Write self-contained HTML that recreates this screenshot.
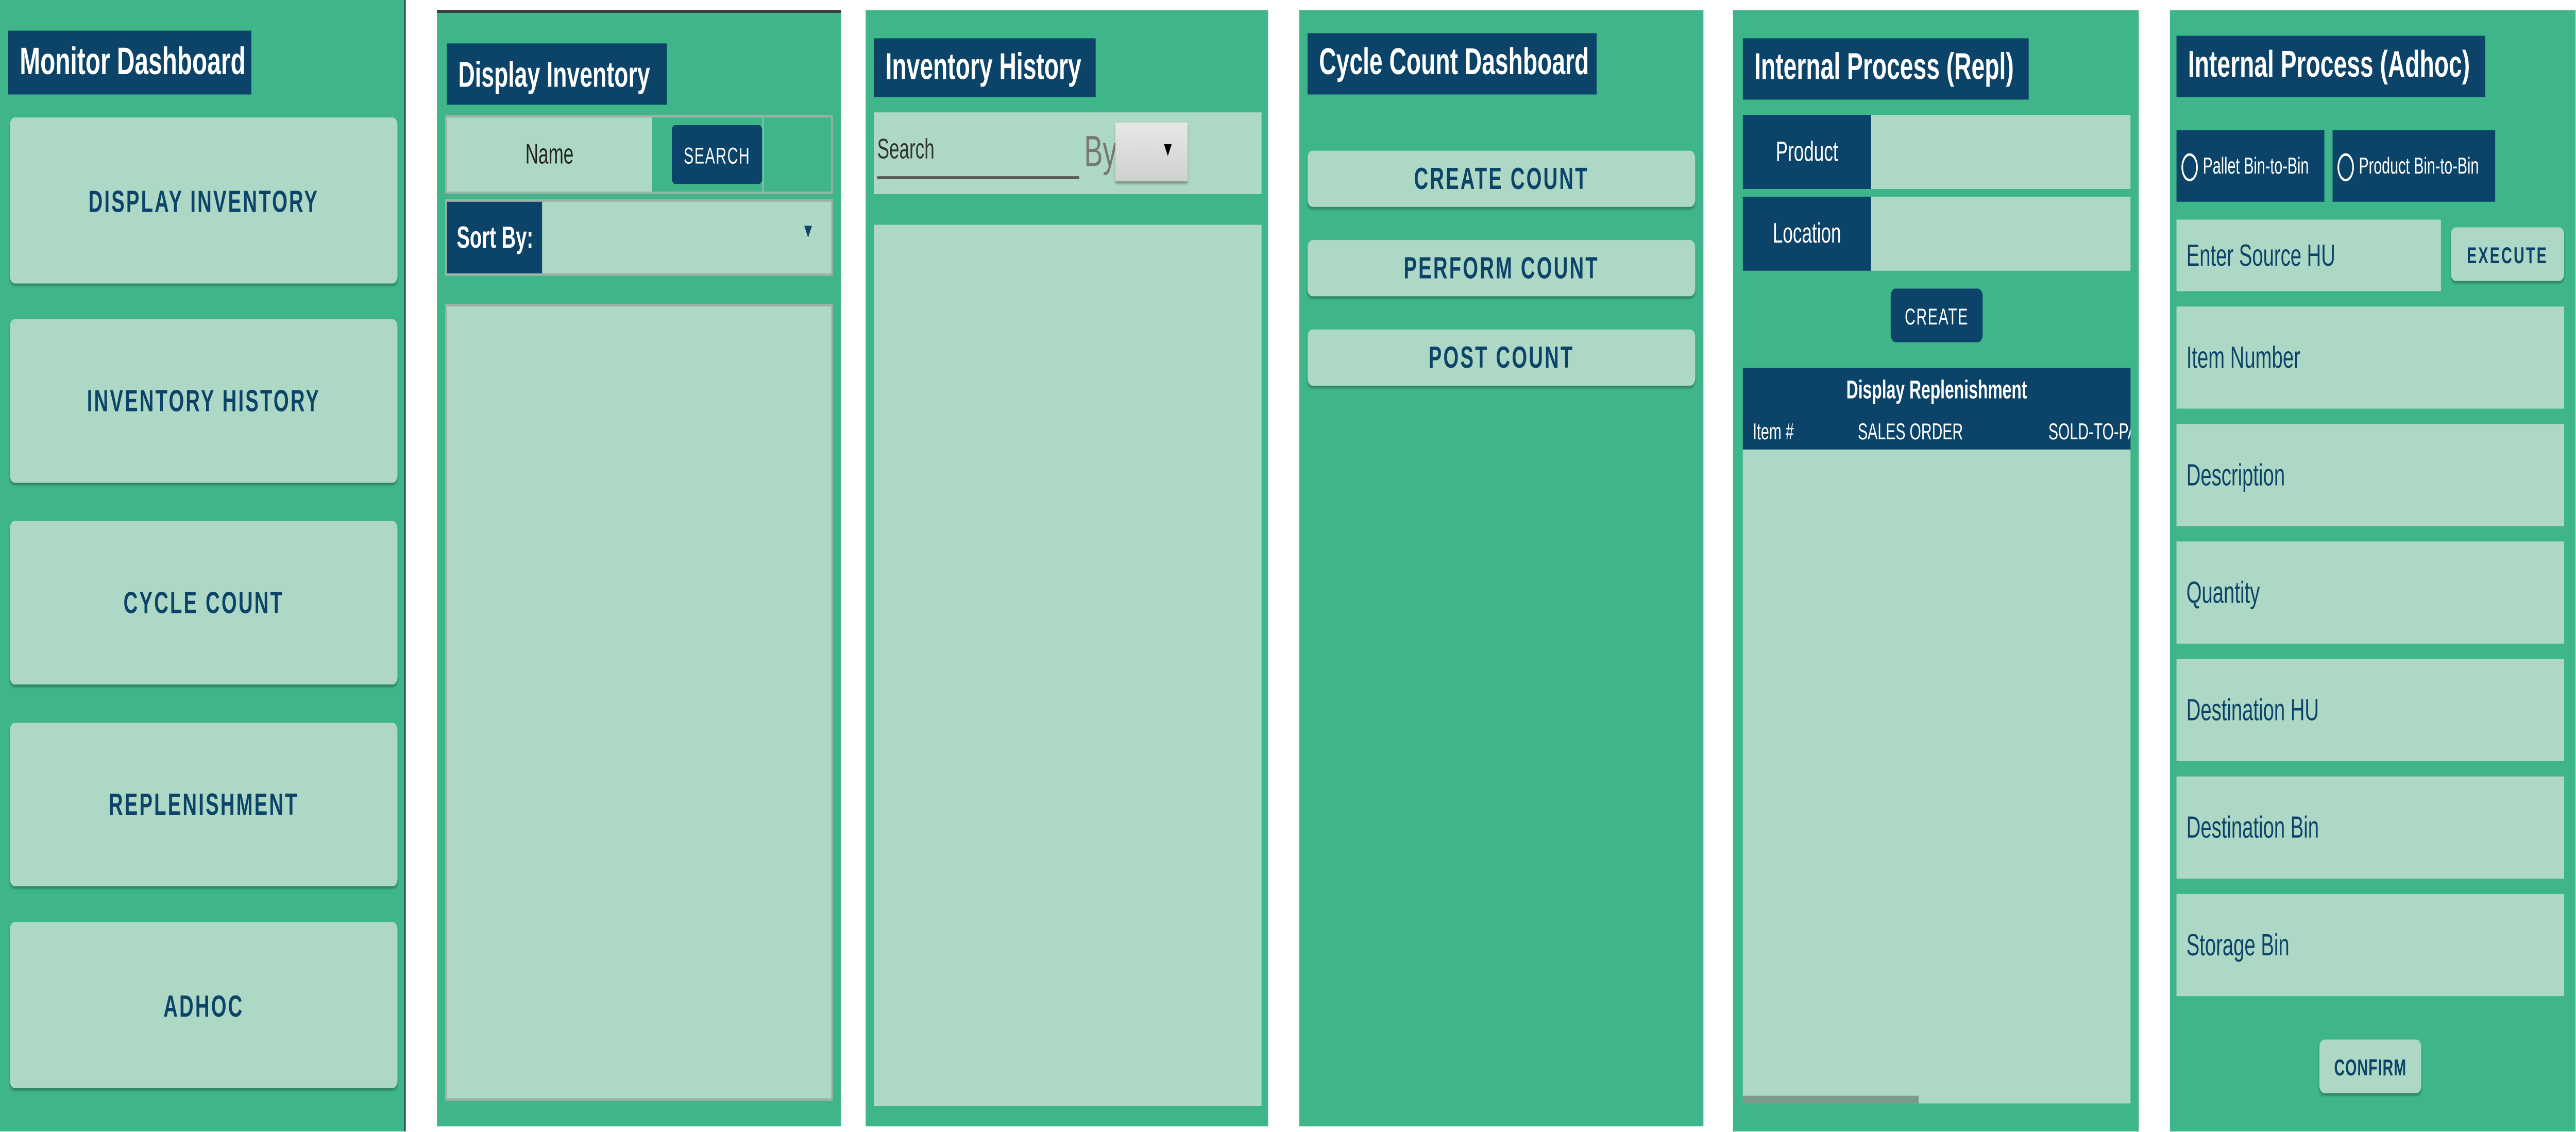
<!DOCTYPE html>
<html><head><meta charset="utf-8"><style>
html,body{margin:0;padding:0;background:#fff;width:100%;height:100%;overflow:hidden}
#w{position:absolute;left:0;top:0;width:1568px;height:443px;transform:scale(4.963,4.96);transform-origin:0 0;font-family:"Liberation Sans",sans-serif;overflow:hidden}
.a{position:absolute;box-sizing:border-box}
.p{background:#3fb689}
.t{background:#0b4468;color:#fff;font-weight:bold;font-size:14.5px;display:flex;align-items:center;padding-left:7px;white-space:nowrap;overflow:hidden}
.l{background:#aed8c6}
.b{background:#aed8c6;border-radius:3px;box-shadow:0 1px 1px rgba(0,0,0,.25);color:#0b4468;font-weight:bold;display:flex;align-items:center;justify-content:center;letter-spacing:1px;white-space:nowrap}
.n{background:#0b4468;color:#fff;display:flex;align-items:center;justify-content:center;white-space:nowrap}
.f{background:#aed8c6;color:#0b4468;font-size:12px;display:flex;align-items:center;padding-left:6px}
</style></head><body><div id="w">
<!-- P1 -->
<div class="a p" style="left:0;top:0;width:247px;height:443px;border-right:1px solid #2c4a3c"></div>
<div class="a t" style="left:5px;top:12px;width:148px;height:25px;font-size:15px">Monitor Dashboard</div>
<div class="a b" style="left:6px;top:46px;width:236px;height:65px;font-size:12px">DISPLAY INVENTORY</div>
<div class="a b" style="left:6px;top:125px;width:236px;height:64px;font-size:12px">INVENTORY HISTORY</div>
<div class="a b" style="left:6px;top:204px;width:236px;height:64px;font-size:12px">CYCLE COUNT</div>
<div class="a b" style="left:6px;top:283px;width:236px;height:64px;font-size:12px">REPLENISHMENT</div>
<div class="a b" style="left:6px;top:361px;width:236px;height:65px;font-size:12px">ADHOC</div>
<!-- P2 -->
<div class="a p" style="left:266px;top:4px;width:246px;height:437px;border-top:1px solid #333"></div>
<div class="a t" style="left:272px;top:17px;width:134px;height:24px;font-size:14px">Display Inventory</div>
<div class="a" style="left:271px;top:45px;width:236px;height:31px;border:1px solid #9fb0a8;background:#3fb689"></div>
<div class="a l" style="left:272px;top:46px;width:125px;height:29px;display:flex;align-items:center;justify-content:center;font-size:11px;color:#222">Name</div>
<div class="a n" style="left:409px;top:49px;width:55px;height:23px;border-radius:2px;font-size:9px;letter-spacing:.5px">SEARCH</div>
<div class="a" style="left:464px;top:46px;width:1px;height:29px;background:#7cc2a4"></div>
<div class="a l" style="left:271px;top:78px;width:236px;height:30px;border:1px solid #9fb0a8"></div>
<div class="a n" style="left:272px;top:79px;width:58px;height:28px;font-weight:bold;font-size:12px;justify-content:flex-start;padding-left:6px">Sort By:</div>
<div class="a" style="left:488px;top:86px;font-size:8px;color:#0b4468">▼</div>
<div class="a l" style="left:271px;top:119px;width:236px;height:312px;border:1px solid #9fb0a8"></div>
<!-- P3 -->
<div class="a p" style="left:527px;top:4px;width:245px;height:437px"></div>
<div class="a t" style="left:532px;top:15px;width:135px;height:23px">Inventory History</div>
<div class="a l" style="left:532px;top:44px;width:236px;height:32px"></div>
<div class="a" style="left:534px;top:53px;font-size:11px;color:#333">Search</div>
<div class="a" style="left:534px;top:69px;width:123px;height:1px;background:#555"></div>
<div class="a" style="left:660px;top:50px;font-size:17px;color:#777">By</div>
<div class="a" style="left:679px;top:48px;width:44px;height:23px;background:linear-gradient(#e6e8e6,#cfd1cf);box-shadow:0 1px 1px rgba(0,0,0,.3)"></div>
<div class="a" style="left:707px;top:54px;font-size:8px;color:#000">▼</div>
<div class="a l" style="left:532px;top:88px;width:236px;height:345px"></div>
<!-- P4 -->
<div class="a p" style="left:791px;top:4px;width:246px;height:437px"></div>
<div class="a t" style="left:796px;top:13px;width:176px;height:24px">Cycle Count Dashboard</div>
<div class="a b" style="left:796px;top:59px;width:236px;height:22px;font-size:12px">CREATE COUNT</div>
<div class="a b" style="left:796px;top:94px;width:236px;height:22px;font-size:12px">PERFORM COUNT</div>
<div class="a b" style="left:796px;top:129px;width:236px;height:22px;font-size:12px">POST COUNT</div>
<!-- P5 -->
<div class="a p" style="left:1055px;top:4px;width:247px;height:439px"></div>
<div class="a t" style="left:1061px;top:15px;width:174px;height:24px">Internal Process (Repl)</div>
<div class="a l" style="left:1139px;top:45px;width:158px;height:29px"></div>
<div class="a n" style="left:1061px;top:45px;width:78px;height:29px;font-size:11px">Product</div>
<div class="a l" style="left:1139px;top:77px;width:158px;height:29px"></div>
<div class="a n" style="left:1061px;top:77px;width:78px;height:29px;font-size:11px">Location</div>
<div class="a n" style="left:1151px;top:113px;width:56px;height:21px;border-radius:3px;font-size:9px;letter-spacing:.5px">CREATE</div>
<div class="a n" style="left:1061px;top:144px;width:236px;height:32px;display:block"></div>
<div class="a" style="left:1061px;top:148px;width:236px;text-align:center;color:#fff;font-size:10px;font-weight:bold">Display Replenishment</div>
<div class="a" style="left:1067px;top:164px;color:#fff;font-size:9px">Item #</div>
<div class="a" style="left:1131px;top:164px;color:#fff;font-size:9px">SALES ORDER</div>
<div class="a" style="left:1247px;top:164px;width:50px;overflow:hidden;color:#fff;font-size:9px;white-space:nowrap">SOLD-TO-PARTY</div>
<div class="a l" style="left:1061px;top:176px;width:236px;height:256px"></div>
<div class="a" style="left:1061px;top:429px;width:107px;height:3px;background:#7a9a8c"></div>
<!-- P6 -->
<div class="a p" style="left:1321px;top:4px;width:247px;height:439px"></div>
<div class="a t" style="left:1325px;top:14px;width:188px;height:24px">Internal Process (Adhoc)</div>
<div class="a n" style="left:1325px;top:51px;width:90px;height:28px;font-size:9px;justify-content:flex-start;padding-left:3px"><span style="display:inline-block;width:8px;height:9px;border:1.3px solid #fff;border-radius:50%;margin-right:3px"></span>Pallet Bin-to-Bin</div>
<div class="a n" style="left:1420px;top:51px;width:99px;height:28px;font-size:9px;justify-content:flex-start;padding-left:3px"><span style="display:inline-block;width:8px;height:9px;border:1.3px solid #fff;border-radius:50%;margin-right:3px"></span>Product Bin-to-Bin</div>
<div class="a f" style="left:1325px;top:86px;width:161px;height:28px">Enter Source HU</div>
<div class="a b" style="left:1492px;top:89px;width:69px;height:21px;font-size:9px">EXECUTE</div>
<div class="a f" style="left:1325px;top:120px;width:236px;height:40px">Item Number</div>
<div class="a f" style="left:1325px;top:166px;width:236px;height:40px">Description</div>
<div class="a f" style="left:1325px;top:212px;width:236px;height:40px">Quantity</div>
<div class="a f" style="left:1325px;top:258px;width:236px;height:40px">Destination HU</div>
<div class="a f" style="left:1325px;top:304px;width:236px;height:40px">Destination Bin</div>
<div class="a f" style="left:1325px;top:350px;width:236px;height:40px">Storage Bin</div>
<div class="a b" style="left:1412px;top:407px;width:62px;height:21px;font-size:9px;letter-spacing:.3px">CONFIRM</div>
</div>
<script>
(function(){var w=document.getElementById('w');function f(){var W=window.innerWidth||7783,H=window.innerHeight||2198;w.style.transform='scale('+(W/1568.2)+','+(H/443.2)+')';}f();window.addEventListener('resize',f);})();
</script>
</body></html>
